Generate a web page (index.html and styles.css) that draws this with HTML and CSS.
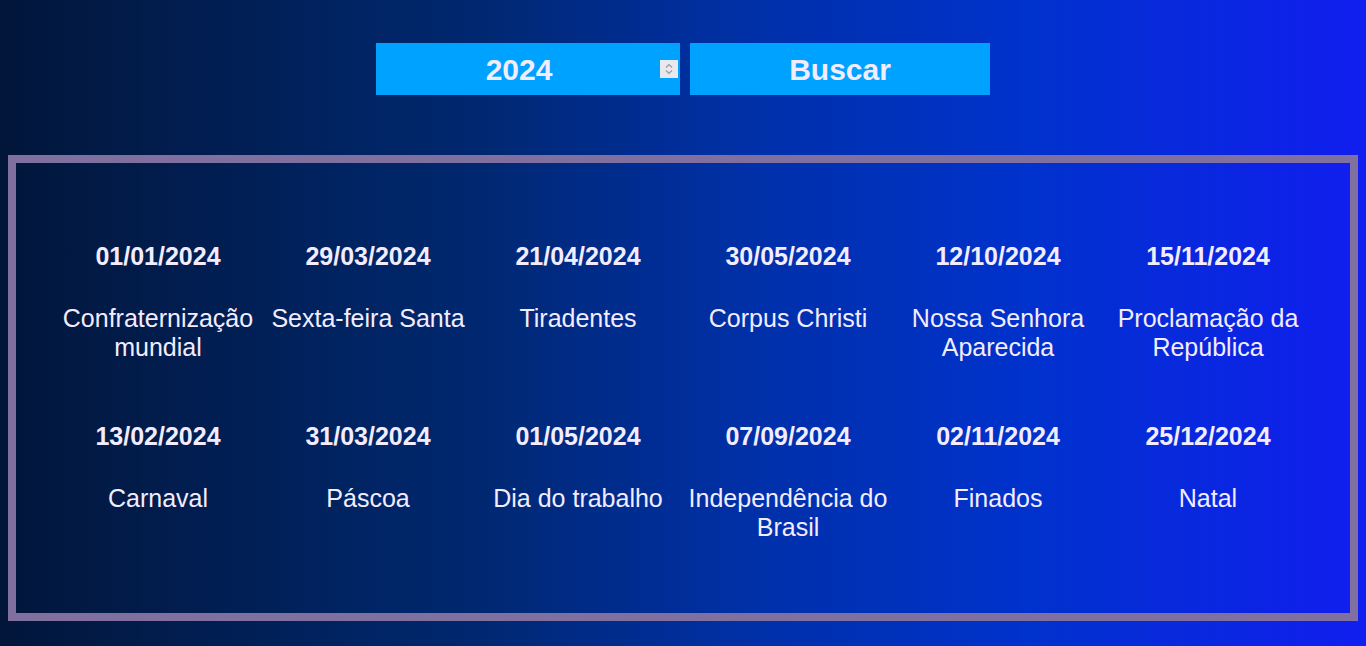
FILE: index.html
```html
<!DOCTYPE html>
<html lang="pt-BR">
<head>
<meta charset="utf-8">
<title>Feriados</title>
<link rel="stylesheet" href="styles.css">
</head>
<body>
<form class="search">
  <div class="field">
    <input class="year" type="number" value="2024">
    <span class="spin">
      <svg width="18" height="18" viewBox="0 0 18 18"><path d="M6 7.5 L9 4.5 L12 7.5" fill="none" stroke="#9a9aa4" stroke-width="1.2"/><path d="M6 10.5 L9 13.5 L12 10.5" fill="none" stroke="#9a9aa4" stroke-width="1.2"/></svg>
    </span>
  </div>
  <button class="btn" type="button">Buscar</button>
</form>
<section class="board">
  <div class="grid">
    <div class="item"><div class="date">01/01/2024</div><div class="name">Confraternização mundial</div></div>
    <div class="item"><div class="date">29/03/2024</div><div class="name">Sexta-feira Santa</div></div>
    <div class="item"><div class="date">21/04/2024</div><div class="name">Tiradentes</div></div>
    <div class="item"><div class="date">30/05/2024</div><div class="name">Corpus Christi</div></div>
    <div class="item"><div class="date">12/10/2024</div><div class="name">Nossa Senhora Aparecida</div></div>
    <div class="item"><div class="date">15/11/2024</div><div class="name">Proclamação da República</div></div>
    <div class="item"><div class="date">13/02/2024</div><div class="name">Carnaval</div></div>
    <div class="item"><div class="date">31/03/2024</div><div class="name">Páscoa</div></div>
    <div class="item"><div class="date">01/05/2024</div><div class="name">Dia do trabalho</div></div>
    <div class="item"><div class="date">07/09/2024</div><div class="name">Independência do Brasil</div></div>
    <div class="item"><div class="date">02/11/2024</div><div class="name">Finados</div></div>
    <div class="item"><div class="date">25/12/2024</div><div class="name">Natal</div></div>
  </div>
</section>
</body>
</html>
```
FILE: styles.css
```css
html, body {
  margin: 0;
  padding: 0;
}
body {
  min-height: 646px;
  background: linear-gradient(90deg, #02163a 0%, #002870 35%, #0030a8 55%, #0032cc 75%, #111ef0 100%);
  font-family: "Liberation Sans", Arial, sans-serif;
  color: #f3ecff;
  overflow: hidden;
}
.search {
  display: flex;
  justify-content: center;
  gap: 10px;
  padding-top: 43px;
  margin: 0;
}
.field {
  position: relative;
  width: 304px;
  height: 52px;
}
.year, .btn {
  box-sizing: border-box;
  height: 52px;
  border: none;
  background: #00a2ff;
  color: #f3ecff;
  font-family: "Liberation Sans", Arial, sans-serif;
  font-size: 30px;
  font-weight: bold;
  text-align: center;
  margin: 0;
  outline: none;
}
.year {
  width: 304px;
  padding: 1px 20px 0 2px;
  -moz-appearance: textfield;
}
.year::-webkit-inner-spin-button,
.year::-webkit-outer-spin-button {
  -webkit-appearance: none;
  margin: 0;
}
.spin {
  position: absolute;
  left: 284px;
  top: 17px;
  width: 18px;
  height: 18px;
  background: #e9e8ee;
  display: block;
}
.spin svg {
  display: block;
}
.btn {
  width: 300px;
  padding: 1px 0 0;
}
.board {
  margin: 60px 8px 0;
  border: 8px solid #8070a0;
  height: 466px;
  box-sizing: border-box;
}
.grid {
  display: grid;
  grid-template-columns: repeat(6, 210px);
  justify-content: center;
  row-gap: 60px;
  padding-top: 79px;
}
.item {
  display: flex;
  flex-direction: column;
  align-items: center;
  text-align: center;
  font-size: 25px;
  line-height: 29px;
}
.date {
  font-weight: bold;
  margin-bottom: 33px;
}
.name {
  min-height: 58px;
}
```
